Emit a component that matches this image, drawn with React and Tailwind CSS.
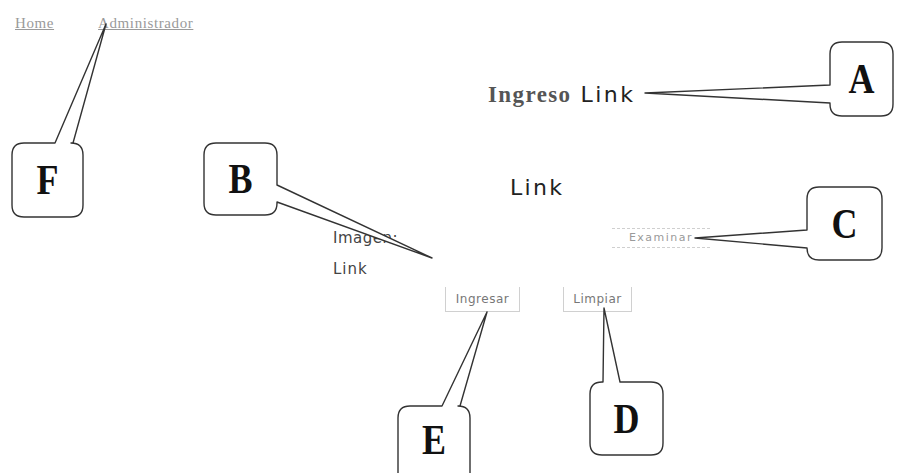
import React from "react";

function calloutPath(x1, y1, x2, y2, r, side, a, b, px, py) {
  let d = `M ${x1 + r} ${y1} `;
  if (side === "top") d += `L ${a} ${y1} L ${px} ${py} L ${b} ${y1} `;
  d += `L ${x2 - r} ${y1} Q ${x2} ${y1} ${x2} ${y1 + r} `;
  if (side === "right") d += `L ${x2} ${a} L ${px} ${py} L ${x2} ${b} `;
  d += `L ${x2} ${y2 - r} Q ${x2} ${y2} ${x2 - r} ${y2} `;
  d += `L ${x1 + r} ${y2} Q ${x1} ${y2} ${x1} ${y2 - r} `;
  if (side === "left") d += `L ${x1} ${b} L ${px} ${py} L ${x1} ${a} `;
  d += `L ${x1} ${y1 + r} Q ${x1} ${y1} ${x1 + r} ${y1} Z`;
  return d;
}

const callouts = [
  { l: "F", box: [12, 143, 83, 217], side: "top", a: 55, b: 73, p: [106, 24] },
  { l: "B", box: [204, 143, 277, 215], side: "right", a: 185, b: 202, p: [432, 258] },
  { l: "A", box: [830, 42, 893, 116], side: "left", a: 85, b: 103, p: [645, 93] },
  { l: "C", box: [807, 187, 882, 260], side: "left", a: 230, b: 248, p: [695, 238] },
  { l: "E", box: [398, 406, 470, 486], side: "top", a: 442, b: 460, p: [487, 312] },
  { l: "D", box: [590, 382, 663, 455], side: "top", a: 603, b: 620, p: [604, 308] },
];

export default function App() {
  return (
    <div className="relative w-[897px] h-[473px] overflow-hidden bg-white">
      {/* page content */}
      <div className="flex flex-col">
        <nav className="flex gap-[44px] pt-[14px] pl-[15px] text-[15px] leading-[18px] tracking-[0.6px] text-[#9a9a9a] font-['Liberation_Serif',serif]">
          <a className="underline">Home</a>
          <a className="underline">Administrador</a>
        </nav>

        <h1 className="mt-[49px] pl-[488px] flex items-baseline gap-[9px] leading-[28px]">
          <span className="font-['Liberation_Serif',serif] font-bold text-[23px] tracking-[1.4px] text-[#555]">Ingreso</span>
          <span className="font-['DejaVu_Sans',sans-serif] text-[22px] tracking-[2.5px] text-[#222]">Link</span>
        </h1>

        <h2 className="mt-[65px] pl-[510px] font-['DejaVu_Sans',sans-serif] text-[22px] leading-[28px] tracking-[2.3px] text-[#222]">
          Link
        </h2>

        <div className="mt-[26px] pl-[333px] flex flex-col font-['DejaVu_Sans',sans-serif] text-[15px] text-[#444]">
          <div className="flex items-center h-[20px]">
            <span className="w-[279px] tracking-[0.5px]">Imagen:</span>
            <button className="w-[98px] h-[20px] border-y border-dashed border-[#cfcfcf] text-[11px] tracking-[1.5px] text-[#9a9a9a] font-['DejaVu_Sans',sans-serif]">
              Examinar
            </button>
          </div>
          <div className="mt-[12px] h-[18px] flex items-center tracking-[1px]">Link</div>
        </div>

        <div className="mt-[9px] pl-[445px] flex gap-[43px] font-['DejaVu_Sans',sans-serif] text-[12px] tracking-[0.5px] text-[#777]">
          <button className="w-[75px] h-[25px] border-x border-b border-[#d0d0d0]">Ingresar</button>
          <button className="w-[69px] h-[25px] border-x border-b border-[#d0d0d0]">Limpiar</button>
        </div>
      </div>

      {/* callouts overlay */}
      <svg className="absolute left-0 top-0" width="897" height="473" viewBox="0 0 897 473">
        {callouts.map((c) => (
          <path
            key={c.l}
            d={calloutPath(c.box[0], c.box[1], c.box[2], c.box[3], 12, c.side, c.a, c.b, c.p[0], c.p[1])}
            fill="white"
            stroke="#333"
            strokeWidth="1.4"
            strokeLinejoin="round"
          />
        ))}
      </svg>
      {callouts.map((c) => (
        <div
          key={c.l}
          className="absolute flex items-center justify-center font-['Liberation_Serif',serif] font-bold text-[36px] text-[#111]"
          style={{
            left: c.box[0],
            top: c.box[1],
            width: c.box[2] - c.box[0],
            height: Math.min(c.box[3], 480) - c.box[1] - (c.l === "E" ? 6 : 0),
          }}
        >
          <span className="scale-y-[1.15] leading-none">{c.l}</span>
        </div>
      ))}
    </div>
  );
}
